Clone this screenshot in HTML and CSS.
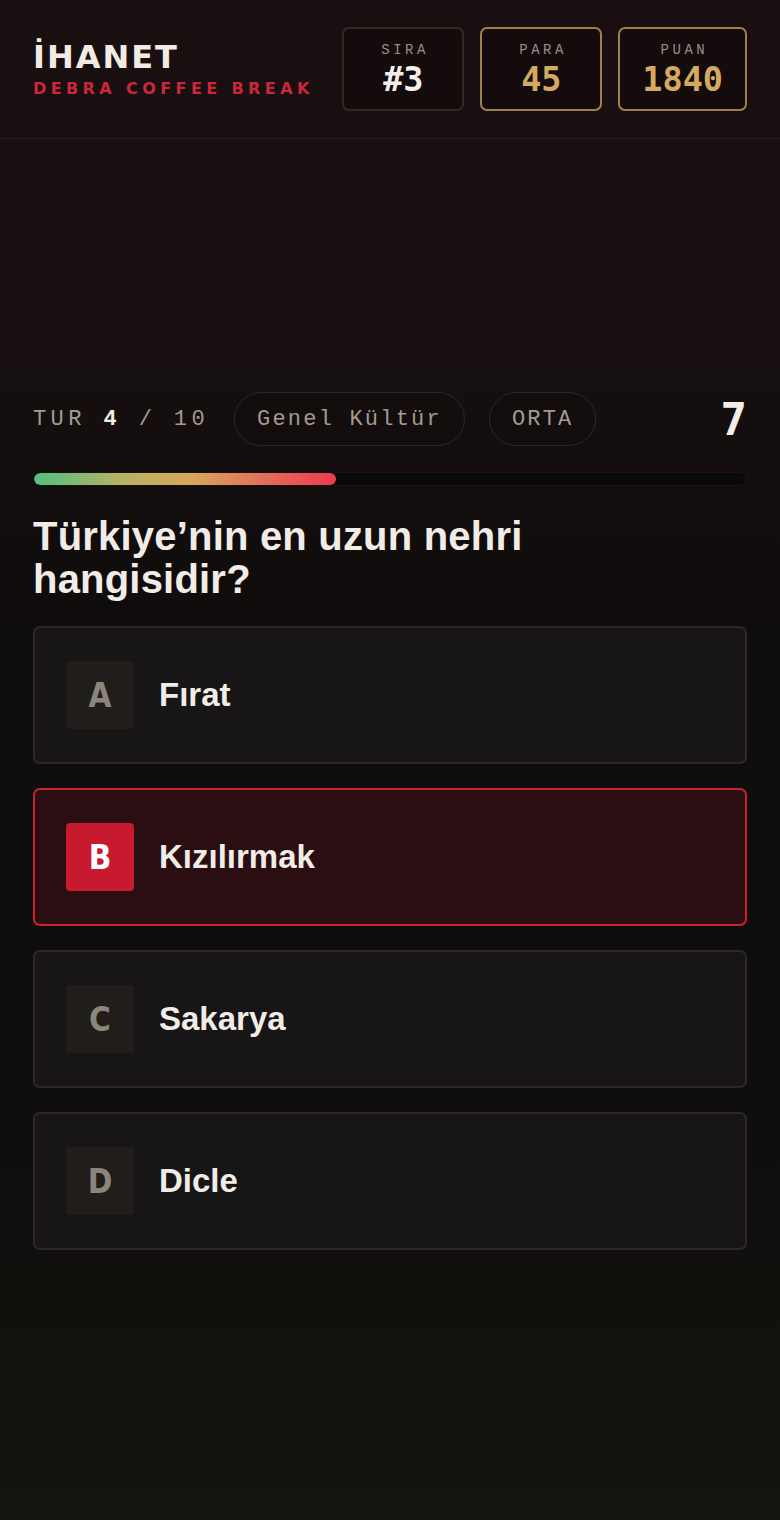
FILE: index.html
```html
<!DOCTYPE html>
<html lang="tr">
<head>
  <meta charset="UTF-8">
  <title>İhanet – Debra Coffee Break</title>
  <meta name="viewport" content="width=device-width, initial-scale=1.0">
  <link rel="stylesheet" href="styles.css">
</head>
<body>

  <header class="topbar">
    <div class="brand">
      <div class="brand-title">İHANET</div>
      <div class="brand-sub">DEBRA COFFEE BREAK</div>
    </div>
    <div class="stats">
      <div class="stat">
        <span class="stat-label">SIRA</span>
        <span class="stat-value">#3</span>
      </div>
      <div class="stat stat-gold">
        <span class="stat-label">PARA</span>
        <span class="stat-value">45</span>
      </div>
      <div class="stat stat-gold">
        <span class="stat-label">PUAN</span>
        <span class="stat-value">1840</span>
      </div>
    </div>
  </header>

  <main class="game">
    <div class="round-row">
      <span class="round">TUR <b>4</b> / 10</span>
      <span class="pill">Genel Kültür</span>
      <span class="pill">ORTA</span>
      <span class="timer">7</span>
    </div>

    <div class="progress">
      <div class="progress-fill" style="width: 42.4%"></div>
    </div>

    <h1 class="question">Türkiye’nin en uzun nehri hangisidir?</h1>

    <div class="answers">
      <button class="answer">
        <span class="answer-key">A</span>
        <span class="answer-text">Fırat</span>
      </button>
      <button class="answer selected">
        <span class="answer-key">B</span>
        <span class="answer-text">Kızılırmak</span>
      </button>
      <button class="answer">
        <span class="answer-key">C</span>
        <span class="answer-text">Sakarya</span>
      </button>
      <button class="answer">
        <span class="answer-key">D</span>
        <span class="answer-text">Dicle</span>
      </button>
    </div>
  </main>

</body>
</html>
```

FILE: styles.css
```css
html {
  background: #0e0c0b;
}

body {
  margin: 0;
  min-height: 1520px;
  font-family: "Liberation Sans", Arial, sans-serif;
  color: #f1ece6;
  background: linear-gradient(180deg, #1a1011 0%, #170f10 22%, #0f0c0c 42%, #0f0d0c 70%, #15130f 100%);
}

/* Barre du haut */
.topbar {
  display: flex;
  align-items: center;
  justify-content: space-between;
  padding: 27px 33px;
  border-bottom: 1px solid #2a1e1f;
  background: #1a0f10;
}

.brand-title {
  font-family: "DejaVu Sans", sans-serif;
  font-weight: 700;
  font-size: 32px;
  letter-spacing: 2px;
  line-height: 34px;
  color: #f1ebe4;
}

.brand-sub {
  margin-top: 5px;
  font-family: "DejaVu Sans", sans-serif;
  font-weight: 700;
  font-size: 16px;
  letter-spacing: 4.4px;
  color: #c9283b;
}

.stats {
  display: flex;
  gap: 16px;
}

.stat {
  display: flex;
  flex-direction: column;
  align-items: center;
  justify-content: center;
  gap: 3px;
  min-width: 122px;
  height: 84px;
  box-sizing: border-box;
  padding: 2px 22px 0;
  border: 2px solid #332828;
  border-radius: 7px;
  background: #140b0c;
}

.stat-gold {
  border-color: #9f814b;
}

.stat-label {
  font-family: "Liberation Mono", monospace;
  font-size: 14px;
  letter-spacing: 3.5px;
  margin-right: -3.5px;
  color: #98908a;
  line-height: 16px;
}

.stat-value {
  font-family: "DejaVu Sans Mono", monospace;
  font-weight: 700;
  font-size: 33.5px;
  line-height: 38px;
  color: #f3eee8;
}

.stat-gold .stat-value {
  color: #d4aa61;
}

/* Jeu */
.game {
  padding: 253px 33px 0;
}

.round-row {
  display: flex;
  align-items: center;
  height: 54px;
}

.round {
  font-family: "Liberation Mono", monospace;
  font-size: 22px;
  letter-spacing: 4.4px;
  color: #a39b93;
  margin-right: 25px;
}

.round b {
  color: #f3eee8;
}

.pill {
  display: flex;
  align-items: center;
  height: 54px;
  box-sizing: border-box;
  padding: 0 22px;
  margin-right: 24px;
  border: 1.5px solid #2f2727;
  border-radius: 27px;
  background: #130d0e;
  font-family: "Liberation Mono", monospace;
  font-size: 22px;
  letter-spacing: 2.2px;
  color: #a39b93;
}

.timer {
  margin-left: auto;
  font-family: "DejaVu Sans Mono", monospace;
  font-weight: 700;
  font-size: 44px;
  color: #f3eee8;
}

.progress {
  margin-top: 26px;
  height: 14px;
  border-radius: 7px;
  background: #0a0909;
  border: 1px solid #171313;
  box-sizing: border-box;
  overflow: hidden;
}

.progress-fill {
  height: 100%;
  border-radius: 7px;
  background: linear-gradient(90deg, #55bd80 0%, #b8b263 30%, #d8a75d 52%, #e2705a 75%, #ee3a4f 100%);
}

.question {
  margin: 29px 0 25px;
  font-family: "Liberation Sans", Arial, sans-serif;
  font-weight: 700;
  font-size: 40px;
  line-height: 43px;
  letter-spacing: 0.2px;
  color: #f1ece6;
  max-width: 690px;
}

.answers {
  display: flex;
  flex-direction: column;
  gap: 24px;
}

.answer {
  display: flex;
  align-items: center;
  gap: 25px;
  width: 100%;
  height: 138px;
  padding: 0 31px;
  box-sizing: border-box;
  border: 2px solid #2b2827;
  border-radius: 7px;
  background: #171515;
  font-family: inherit;
  text-align: left;
  cursor: pointer;
}

.answer-key {
  display: flex;
  align-items: center;
  justify-content: center;
  width: 68px;
  height: 68px;
  border-radius: 4px;
  background: #201d1b;
  font-family: "DejaVu Sans Condensed", "DejaVu Sans", sans-serif;
  font-weight: 700;
  font-size: 33px;
  color: #8b867c;
}

.answer-text {
  font-family: "Liberation Sans", Arial, sans-serif;
  font-weight: 700;
  font-size: 33px;
  color: #f1ece6;
}

.answer.selected {
  border-color: #c8212f;
  background: #2a0e11;
}

.answer.selected .answer-key {
  background: #c81a2e;
  color: #fff;
}
```
